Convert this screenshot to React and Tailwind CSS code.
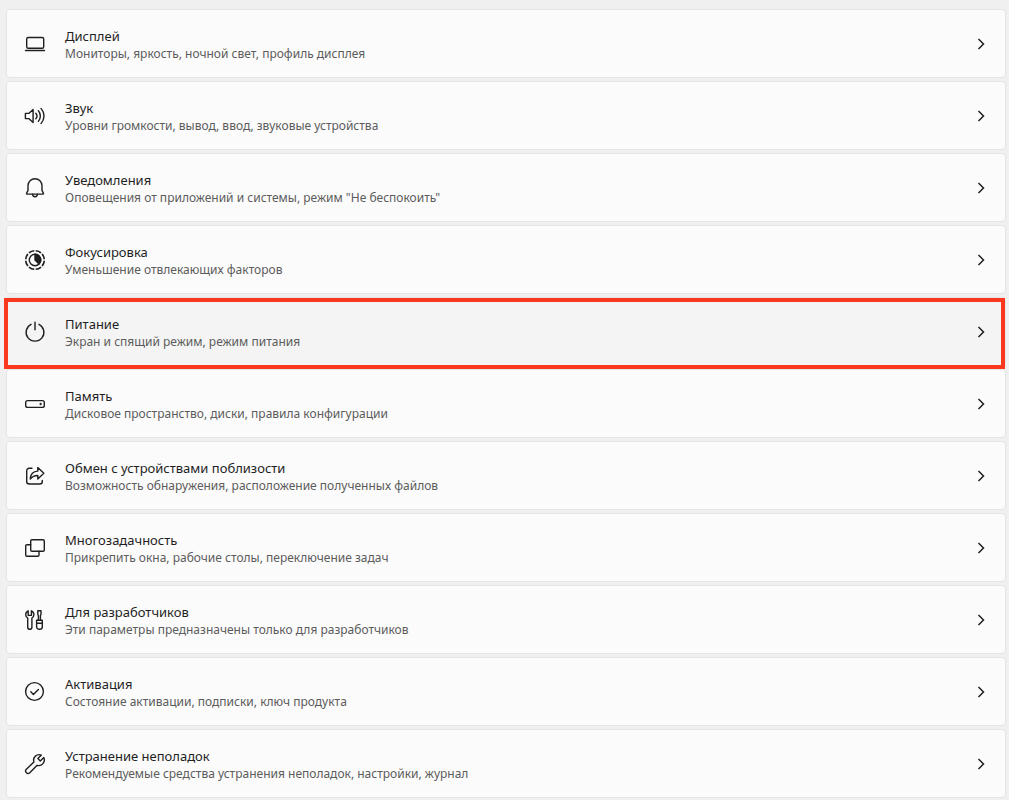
import React from "react";

const Icon = ({ children }) => (
  <svg
    className="size-6 shrink-0"
    viewBox="0 0 24 24"
    fill="none"
    stroke="currentColor"
    strokeWidth="1.4"
    strokeLinecap="round"
    strokeLinejoin="round"
    aria-hidden="true"
  >
    {children}
  </svg>
);

const items = [
  {
    title: "Дисплей",
    text: "Мониторы, яркость, ночной свет, профиль дисплея",
    icon: (
      <>
        <rect x="3.7" y="5.5" width="17" height="10.8" rx="1.6" />
        <path d="M2.5 18.5h19" />
      </>
    ),
  },
  {
    title: "Звук",
    text: "Уровни громкости, вывод, ввод, звуковые устройства",
    icon: (
      <>
        <path d="M2.4 9.4v5.2h3.4l4.3 4V5.4l-4.3 4z" />
        <path d="M12.8 9.2c1.4 1.6 1.4 4 0 5.6M15.4 6.8c2.6 3 2.6 7.4 0 10.4M18 4.4c4 4.4 4 10.8 0 15.2" />
      </>
    ),
  },
  {
    title: "Уведомления",
    text: 'Оповещения от приложений и системы, режим "Не беспокоить"',
    icon: (
      <>
        <path d="M12 2.8a7 7 0 0 0-7 7v4.6l-1.5 3.1c-.1.3.1.6.4.6h16.2c.3 0 .5-.3.4-.6L19 14.4V9.8a7 7 0 0 0-7-7z" />
        <path d="M9.6 18.3a2.4 2.4 0 0 0 4.8 0" />
      </>
    ),
  },
  {
    title: "Фокусировка",
    text: "Уменьшение отвлекающих факторов",
    icon: (
      <>
        <circle
          cx="12"
          cy="12"
          r="9.3"
          strokeWidth="1.7"
          strokeLinecap="butt"
          pathLength="80"
          strokeDasharray="8 2"
          strokeDashoffset="-1"
        />
        <circle cx="12" cy="12" r="5.7" />
        <path d="M12 6.3a5.7 5.7 0 0 1 4 9.7L12 12z" fill="currentColor" />
      </>
    ),
  },
  {
    title: "Питание",
    text: "Экран и спящий режим, режим питания",
    active: true,
    icon: <path d="M12 2.2v7.6M8 4.3a8.9 8.9 0 1 0 8 0" />,
  },
  {
    title: "Память",
    text: "Дисковое пространство, диски, правила конфигурации",
    icon: (
      <>
        <rect x="2.7" y="8.6" width="18.6" height="6.8" rx="2" />
        <circle cx="17.5" cy="12" r=".7" fill="currentColor" strokeWidth="1" />
      </>
    ),
  },
  {
    title: "Обмен с устройствами поблизости",
    text: "Возможность обнаружения, расположение полученных файлов",
    icon: (
      <>
        <path d="M9 4.3H6.2a2.5 2.5 0 0 0-2.5 2.5v10.7A2.5 2.5 0 0 0 6.2 20h10.6a2.5 2.5 0 0 0 2.5-2.5v-1" />
        <path d="M14.8 3.6v3.5c-4.6.2-7.3 2.9-7.5 8 1.900-2.600 4.200-3.600 7.500-3.600V15l6-5.700z" />
      </>
    ),
  },
  {
    title: "Многозадачность",
    text: "Прикрепить окна, рабочие столы, переключение задач",
    icon: (
      <>
        <rect x="7.7" y="3.7" width="13.6" height="11.6" rx="1.3" />
        <path d="M7.7 8.7H4A1.3 1.3 0 0 0 2.7 10v9A1.3 1.3 0 0 0 4 20.300h10.700A1.300 1.300 0 0 0 16 19v-3.700" />
      </>
    ),
  },
  {
    title: "Для разработчиков",
    text: "Эти параметры предназначены только для разработчиков",
    icon: (
      <>
        <path d="M5.2 2.8v4.6h3.2V2.8c1.5.6 2.500 2 2.500 3.700 0 1.500-.8 2.800-2 3.500v9.200a2.100 2.100 0 0 1-4.200 0V10a4 4 0 0 1-2-3.500c0-1.700 1-3.100 2.500-3.700z" />
        <path d="M14.8 2.800h3.200v3.400l-.6 1.500v4.600h-2V7.700l-.6-1.500zM13.600 12.300h5.700v6.400a2.600 2.600 0 0 1-2.600 2.600h-.5a2.600 2.600 0 0 1-2.600-2.600zM13.600 15.300h5.700" />
      </>
    ),
  },
  {
    title: "Активация",
    text: "Состояние активации, подписки, ключ продукта",
    icon: (
      <>
        <circle cx="11.5" cy="11.5" r="8.9" />
        <path d="M7.8 11.8l2.6 2.6 5-5" />
      </>
    ),
  },
  {
    title: "Устранение неполадок",
    text: "Рекомендуемые средства устранения неполадок, настройки, журнал",
    icon: (
      <path d="M18.4 3.1a5.600 5.600 0 0 0-7.500 6.900l-7.500 7.200a2.400 2.400 0 0 0 3.400 3.500l7.300-7.400a5.600 5.600 0 0 0 6.700-7.700l-3.500 3.400-2.400-2.400z" />
    ),
  },
];

const SettingsRow = ({ item }) => (
  <a
    href="#"
    className={`relative flex items-center gap-[18px] rounded-[4px] border border-[#e5e5e5] px-4 pt-4 pb-[15px] text-[#1f1f1f] ${
      item.active ? "bg-[#f4f4f4]" : "bg-[#fbfbfb]"
    }`}
  >
    <Icon>{item.icon}</Icon>
    <span className="flex min-w-0 flex-1 flex-col">
      <span className="text-[13px] leading-5">{item.title}</span>
      <span className="text-[12px] leading-4 text-[#5c5c5c]">{item.text}</span>
    </span>
    <svg
      className="size-4 shrink-0"
      viewBox="0 0 16 16"
      fill="none"
      stroke="currentColor"
      strokeWidth="1.5"
      aria-hidden="true"
    >
      <path d="M5.5 3l5 5-5 5" />
    </svg>
    {/* Destaque do item selecionado */}
    {item.active && (
      <span className="pointer-events-none absolute top-0 right-0 -bottom-1 -left-[3px] z-10 border-4 border-[#fa381e]" />
    )}
  </a>
);

const App = () => {
  return (
    <main className="min-h-screen bg-[#f0f0f0] pt-[9px] pr-[3px] pb-[2px] pl-1.5 font-['Noto_Sans',sans-serif]">
      <nav className="flex flex-col gap-[3px]" aria-label="Система">
        {items.map((item) => (
          <SettingsRow key={item.title} item={item} />
        ))}
      </nav>
    </main>
  );
};

export default App;
